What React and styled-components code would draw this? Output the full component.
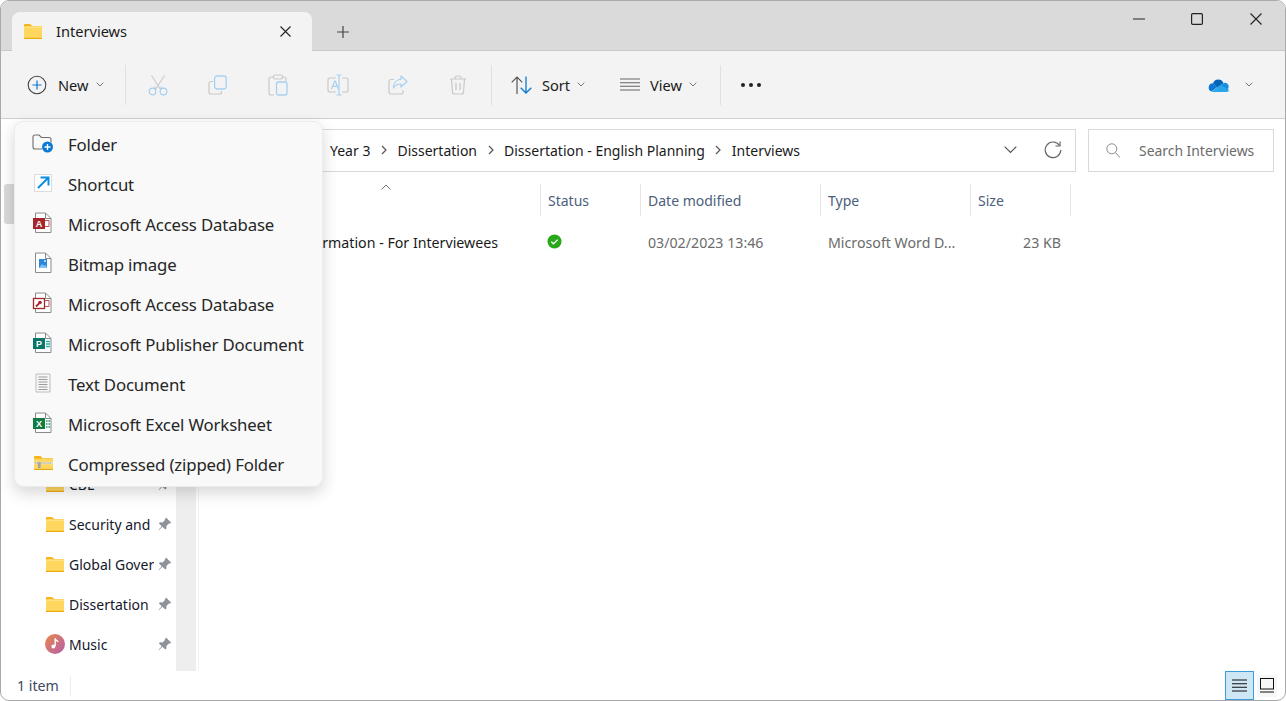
import React from "react";
import styled, { createGlobalStyle } from "styled-components";

const Global = createGlobalStyle`
  html, body { margin: 0; padding: 0; background: #fff; }
  body { font-family: "Noto Sans", "Open Sans", sans-serif; color: #1a1a1a; }
  * { box-sizing: border-box; }
`;

const Window = styled.div`
  position: relative;
  width: 1286px;
  height: 701px;
  display: flex;
  flex-direction: column;
  border: 1px solid #a9a9a9;
  border-radius: 9px;
  overflow: hidden;
  background: #fff;
  font-size: 14.2px;
`;
const TitleBar = styled.div`
  height: 50px;
  flex: none;
  display: flex;
  background: #dadada;
  border-bottom: 1px solid #c9c9c9;
  padding-left: 11px;
`;
const Tab = styled.div`
  margin-top: 11px;
  width: 300px;
  height: 39px;
  background: #f3f3f3;
  border-radius: 8px 8px 0 0;
  display: flex;
  align-items: center;
  padding: 0 12px 1px 12px;
`;
const TabTitle = styled.span`
  flex: 1;
  margin-left: 14px;
  color: #1a1a1a;
  font-size: 14.6px;
`;
const TabClose = styled.span`
  display: flex;
  margin-right: 9px;
`;
const NewTab = styled.div`
  margin: 25px 0 0 25px;
  width: 12px;
  height: 12px;
  display: flex;
`;
const WindowControls = styled.div`
  margin-left: auto;
  display: flex;
`;
const WinBtn = styled.div`
  width: 58.5px;
  height: 36px;
  display: flex;
  align-items: center;
  justify-content: center;
`;
const Toolbar = styled.div`
  height: 68px;
  flex: none;
  display: flex;
  align-items: center;
  background: #f3f3f3;
  border-bottom: 1px solid #cfcfcf;
  padding-left: 26px;
`;
const NewButton = styled.div`
  width: 98px;
  display: flex;
  align-items: center;
`;
const Label = styled.span`
  font-size: 14.6px;
  color: #1a1a1a;
  margin-left: ${(p) => p.$gap}px;
`;
const Caret = styled.span`
  display: flex;
  margin-left: ${(p) => p.$gap}px;
`;
const Sep = styled.div`
  width: 1px;
  height: 40px;
  background: #e0e0e0;
  flex: none;
  margin-left: ${(p) => p.$left || 0}px;
  margin-right: ${(p) => p.$right || 0}px;
`;
const IconBtn = styled.div`
  width: 60px;
  display: flex;
  justify-content: center;
`;
const DropButton = styled.div`
  width: ${(p) => p.$w}px;
  display: flex;
  align-items: center;
`;
const Dots = styled.div`
  margin-left: 20px;
  display: flex;
  gap: 4px;
`;
const Dot = styled.i`
  display: block;
  width: 4px;
  height: 4px;
  border-radius: 50%;
  background: #222;
`;
const CloudArea = styled.div`
  margin-left: auto;
  margin-right: 32px;
  display: flex;
  align-items: center;
  gap: 16px;
`;
const AddressRow = styled.div`
  height: 62px;
  flex: none;
  display: flex;
  align-items: center;
  gap: 12px;
  padding: 0 11px 0 120px;
`;
const AddressBox = styled.div`
  flex: 1;
  height: 43px;
  border: 1px solid #d9d9d9;
  display: flex;
  align-items: center;
  padding: 0 13px 0 208px;
`;
const Crumbs = styled.div`
  flex: 1;
  display: flex;
  align-items: center;
  gap: 10.5px;
`;
const Crumb = styled.span`
  font-size: 14px;
  color: #1a1a1a;
`;
const AddressTools = styled.div`
  display: flex;
  align-items: center;
  gap: 27px;
`;
const SearchBox = styled.div`
  width: 186px;
  height: 43px;
  border: 1px solid #d9d9d9;
  display: flex;
  align-items: center;
  padding-left: 17px;
  gap: 19px;
  color: #6b6b6b;
  font-size: 13.9px;
`;
const Content = styled.div`
  flex: 1;
  min-height: 0;
  display: flex;
`;
const Sidebar = styled.nav`
  width: 175px;
  flex: none;
  padding-top: 3px;
`;
const NavRow = styled.div`
  height: 40px;
  margin-left: 3px;
  padding-left: 41px;
  display: flex;
  align-items: center;
  border-radius: 3px;
  background: ${(p) => (p.$active ? "#d9d9d9" : "transparent")};
`;
const NavIcon = styled.span`
  width: 20px;
  display: flex;
  justify-content: center;
  flex: none;
`;
const NavText = styled.span`
  width: 85px;
  margin-left: 4px;
  overflow: hidden;
  white-space: nowrap;
  font-size: 14px;
  color: #14182a;
  flex: none;
`;
const Pin = styled.span`
  display: flex;
  margin-left: 4px;
`;
const Track = styled.div`
  width: 20px;
  flex: none;
  background: #eeeeee;
`;
const Divider = styled.div`
  width: 1px;
  margin-left: 2px;
  flex: none;
  background: #f3f3f3;
`;
const Files = styled.div`
  flex: 1;
  padding: 3px 0 0 1px;
`;
const HeaderRow = styled.div`
  position: relative;
  display: flex;
  height: 32px;
`;
const HeaderCell = styled.div`
  width: ${(p) => p.$w}px;
  flex: none;
  display: flex;
  align-items: center;
  padding-left: 7px;
  border-right: 1px solid #e5e5e5;
  font-size: 14px;
  color: #4b607c;
`;
const SortMark = styled.span`
  position: absolute;
  left: 181px;
  top: 0;
  display: flex;
`;
const FileRow = styled.div`
  display: flex;
  align-items: center;
  height: 40px;
  margin-top: 6px;
`;
const FileCell = styled.div`
  width: ${(p) => p.$w}px;
  flex: none;
  display: flex;
  align-items: center;
  padding: ${(p) => p.$pad || "0 0 0 7px"};
  justify-content: ${(p) => (p.$end ? "flex-end" : "flex-start")};
  font-size: 14.2px;
  color: ${(p) => p.$color || "#6b6b6b"};
  white-space: nowrap;
`;
const StatusBar = styled.div`
  height: 29px;
  flex: none;
  display: flex;
  align-items: center;
  padding-left: 16px;
  font-size: 14.2px;
  color: #3b4a60;
`;
const ItemSep = styled.div`
  width: 1px;
  height: 20px;
  margin-left: 11px;
  background: #ececec;
`;
const ViewToggles = styled.div`
  margin-left: auto;
  margin-right: 8px;
  display: flex;
  align-items: center;
  gap: 3px;
`;
const ToggleOn = styled.div`
  width: 29px;
  height: 29px;
  border: 1px solid #3d9bdc;
  background: #cfe6f5;
  display: flex;
  align-items: center;
  justify-content: center;
`;
const ToggleOff = styled.div`
  width: 20px;
  height: 22px;
  background: #f7f7f7;
  display: flex;
  align-items: center;
  justify-content: center;
`;
const Menu = styled.div`
  position: absolute;
  left: 13px;
  top: 120px;
  width: 309px;
  height: 366px;
  padding-top: 2.5px;
  background: #f9f9f9;
  border: 1px solid #ececec;
  border-radius: 9px;
  box-shadow: 0 6px 16px rgba(0, 0, 0, 0.16);
`;
const MenuRow = styled.div`
  height: 40px;
  display: flex;
  align-items: center;
  padding-left: 17px;
`;
const MenuIcon = styled.span`
  width: 22px;
  margin-bottom: 3px;
  display: flex;
  justify-content: center;
  flex: none;
`;
const MenuText = styled.span`
  margin-left: 14px;
  font-size: 16.8px;
  letter-spacing: -0.15px;
  color: #262626;
  white-space: nowrap;
`;

const Svg = ({ w, h, children }) => (
  <svg width={w} height={h} viewBox={`0 0 ${w} ${h}`} fill="none" style={{ display: "block" }}>
    {children}
  </svg>
);

const Chevron = ({ color = "#777" }) => (
  <Svg w={8} h={5}>
    <path d="M.7.7 4 4 7.300.7" stroke={color} strokeWidth="1" />
  </Svg>
);
const BigChevron = () => (
  <Svg w={13} h={8}>
    <path d="M.7.7 6.500 6.500 12.300.7" stroke="#555" strokeWidth="1.200" />
  </Svg>
);
const CrumbSep = () => (
  <Svg w={6} h={10}>
    <path d="M1 1l4 4-4 4" stroke="#555" strokeWidth="1.200" />
  </Svg>
);
const Folder = ({ w = 18, h = 15 }) => (
  <svg width={w} height={h} viewBox="0 0 18 15" style={{ display: "block" }}>
    <path d="M0 1.200C0 .5.500 0 1.200 0h4.200c.5 0 .9.200 1.200.5L8.300 2H18v3H0z" fill="#f5b518" />
    <rect x="0" y="2.600" width="18" height="12.400" rx=".8" fill="#ffd75e" />
    <rect x="0" y="2.600" width="18" height="1" fill="#ffe99c" />
    <rect x="0" y="13.800" width="18" height="1.200" fill="#ebac12" />
  </svg>
);
const PinIcon = () => (
  <Svg w={14} h={14}>
    <path d="M8.300.8l4.900 4.900-1.200.9-1.100-.2-2.500 2.500.1 2.600-1.200 1.100-2.900-2.900L1.200 13l-.4-.4 2.900-3.300L.9 6.400l1-1.200 2.700.2 2.400-2.500-.1-1.100z" fill="#8d939a" />
  </Svg>
);
const MusicIcon = () => (
  <svg width="20" height="20" viewBox="0 0 20 20" style={{ display: "block" }}>
    <defs>
      <linearGradient id="mg" x1="0" y1="0" x2="1" y2="1">
        <stop offset="0" stopColor="#ea8748" />
        <stop offset="1" stopColor="#b45fae" />
      </linearGradient>
    </defs>
    <circle cx="10" cy="10" r="10" fill="url(#mg)" />
    <path d="M10.200 4.500v7.500" stroke="#fff" strokeWidth="1.400" />
    <path d="M10.200 4.500c.3 2 2.200 2 3 3.400" stroke="#fff" strokeWidth="1.300" />
    <circle cx="8.400" cy="12.600" r="2" fill="#fff" />
  </svg>
);

const G = "#c9c9c9";
const B = "#a8d0f0";
const CutIcon = () => (
  <Svg w={20} h={22}>
    <path d="M3.500 1.500l9 14M16.500 1.500l-9 14" stroke={G} strokeWidth="1.100" />
    <path d="M6.500 12.500l1 3M13.500 12.500l-1 3" stroke={B} strokeWidth="1.100" />
    <circle cx="4.500" cy="17.500" r="3.300" stroke={B} strokeWidth="1.200" />
    <circle cx="15.500" cy="17.500" r="3.300" stroke={B} strokeWidth="1.200" />
  </Svg>
);
const CopyIcon = () => (
  <Svg w={20} h={20}>
    <path d="M5 5.500H3a2 2 0 0 0-2 2V16a2 2 0 0 0 2 2h8.500a2 2 0 0 0 2-2v-1" stroke={G} strokeWidth="1.200" transform="translate(0 1)" />
    <rect x="6.600" y="1" width="11.600" height="13" rx="2.400" stroke={B} strokeWidth="1.300" />
  </Svg>
);
const PasteIcon = () => (
  <Svg w={20} h={22}>
    <path d="M5.500 3H3a2 2 0 0 0-2 2v14a2 2 0 0 0 2 2h3" stroke={G} strokeWidth="1.200" />
    <path d="M14 3h2a2 2 0 0 1 2 2v2" stroke={G} strokeWidth="1.200" />
    <rect x="5.500" y="1" width="9" height="4" rx="1.500" stroke={G} strokeWidth="1.200" />
    <rect x="8.500" y="8" width="10.500" height="13" rx="2" stroke={B} strokeWidth="1.300" />
  </Svg>
);
const RenameIcon = () => (
  <Svg w={22} h={22}>
    <path d="M9 4H3a2 2 0 0 0-2 2v10a2 2 0 0 0 2 2h6M15 4h4a2 2 0 0 1 2 2v10a2 2 0 0 1-2 2h-4" stroke={G} strokeWidth="1.200" />
    <path d="M12 1v20M9.500 1h5M9.500 21h5" stroke={B} strokeWidth="1.200" />
    <path d="M4.500 15L7.700 7h.6l3 8M5.700 12.300h4.800" stroke={B} strokeWidth="1.200" />
  </Svg>
);
const ShareIcon = () => (
  <Svg w={20} h={20}>
    <path d="M6 4.500H3a2 2 0 0 0-2 2V17a2 2 0 0 0 2 2h10a2 2 0 0 0 2-2v-2" stroke={G} strokeWidth="1.200" />
    <path d="M13 1l6 5.500-6 5.500V9c-4 0-6 1.500-7.500 4C5.500 8.500 8 4.500 13 4.200z" stroke={B} strokeWidth="1.200" strokeLinejoin="round" />
  </Svg>
);
const TrashIcon = () => (
  <Svg w={18} h={20}>
    <path d="M1 4h16M6 4V3a2 2 0 0 1 2-2h2a2 2 0 0 1 2 2v1" stroke={G} strokeWidth="1.200" />
    <path d="M2.500 4l1 13a2 2 0 0 0 2 2h7a2 2 0 0 0 2-2l1-13" stroke={G} strokeWidth="1.200" />
    <path d="M7 8v7M11 8v7" stroke={G} strokeWidth="1.400" />
  </Svg>
);
const SortIcon = () => (
  <Svg w={21} h={18}>
    <path d="M6 18V1M.7 6.300 6 1l5.300 5.300" stroke="#555" strokeWidth="1.200" />
    <path d="M15 .5V17M9.700 11.700 15 17l5.300-5.300" stroke="#0a7cd6" strokeWidth="1.300" />
  </Svg>
);
const ViewIcon = () => (
  <Svg w={20} h={13}>
    <path d="M0 1h20M0 4.700h20M0 8.300h20M0 12h20" stroke="#666" strokeWidth="1.100" />
  </Svg>
);
const OneDrive = () => (
  <svg width="21" height="14" viewBox="0 0 21 14" style={{ display: "block" }}>
    <path d="M5 5.200A5.500 5.500 0 0 1 15.500 5.300L9 9.500z" fill="#0364b8" />
    <path d="M5 5.200a4.300 4.300 0 0 0-1.600 8.300L9 9.500z" fill="#0a78d4" />
    <path d="M15.500 5.300L9 9.500l5 4.500h5l1.500-4.600a3.500 3.500 0 0 0-5-4.100z" fill="#1490df" />
    <path d="M3.400 13.500c.6.300 1.200.5 1.900.5h13.200c1.200 0 2.200-.9 2.500-2L13 7.200z" fill="#28a8ea" />
  </svg>
);

const DocOutline = ({ children }) => (
  <Svg w={22} h={22}>
    <path d="M3.500 1h10l5.500 5.500V20.500H3.500z" fill="#fff" stroke="#8a8a8a" strokeWidth="1" />
    <path d="M13.500 1v5.500H19" stroke="#8a8a8a" strokeWidth="1" />
    {children}
  </Svg>
);
const Letter = ({ bg, c }) => (
  <>
    <rect x="1" y="6" width="12" height="11" fill={bg} />
    <text x="7" y="15" textAnchor="middle" fontSize="9" fontWeight="700" fill="#fff" fontFamily="Liberation Sans, sans-serif">{c}</text>
  </>
);
const FolderNew = () => (
  <Svg w={22} h={20}>
    <path d="M1 4a2 2 0 0 1 2-2h4l2.500 2.500H17a2 2 0 0 1 2 2v3M1 4v10a2 2 0 0 0 2 2h7" stroke="#6e6e6e" strokeWidth="1.100" />
    <circle cx="15.500" cy="14" r="5.500" fill="#0a78d4" />
    <path d="M15.500 11v6M12.500 14h6" stroke="#fff" strokeWidth="1.300" />
  </Svg>
);
const ShortcutIcon = () => (
  <Svg w={18} h={18}>
    <rect x=".5" y=".5" width="17" height="17" fill="#fff" stroke="#dcdcdc" />
    <path d="M4 14L14 4M6.500 3.500h8v8" stroke="#0c8ee6" strokeWidth="2" fill="none" />
  </Svg>
);
const AccessIcon = () => (
  <DocOutline>
    <Letter bg="#a4262c" c="A" />
    <path d="M13 8.500h4v6h-4" stroke="#c8505a" strokeWidth="1" />
  </DocOutline>
);
const BitmapIcon = () => (
  <DocOutline>
    <rect x="7" y="7" width="8" height="9" fill="#2b88d8" />
    <path d="M7 16l3-4 2 2 1.200-1.500L15 16z" fill="#7fc4f5" />
    <circle cx="13" cy="9" r="1" fill="#d9efff" />
  </DocOutline>
);
const KeyAccessIcon = () => (
  <DocOutline>
    <rect x="1.500" y="6.500" width="11" height="10" fill="#fff" stroke="#a4262c" strokeWidth="1.300" />
    <path d="M4 14.500L7 11.500" stroke="#a4262c" strokeWidth="1.800" />
    <circle cx="8" cy="10.500" r="1.800" fill="#a4262c" />
    <path d="M13 8.500h4v6h-4" stroke="#c8505a" strokeWidth="1" />
  </DocOutline>
);
const PublisherIcon = () => (
  <DocOutline>
    <Letter bg="#077568" c="P" />
    <path d="M14 9.500h4M14 12h4M14 14.500h4" stroke="#26b5a5" strokeWidth="1.300" />
  </DocOutline>
);
const TextDocIcon = () => (
  <Svg w={18} h={20}>
    <path d="M2 1h14v18H2z" fill="#f7f7f7" stroke="#bdbdbd" />
    <path d="M4.500 4h9M4.500 6.500h9M4.500 9h9M4.500 11.500h9M4.500 14h9M4.500 16.500h9" stroke="#9a9a9a" strokeWidth="1" />
  </Svg>
);
const ExcelIcon = () => (
  <DocOutline>
    <Letter bg="#107c41" c="X" />
    <path d="M14 9h1.600M16.400 9h1.600M14 12h1.600M16.400 12h1.600M14 15h1.600M16.400 15h1.600" stroke="#21a366" strokeWidth="1.500" />
  </DocOutline>
);
const ZipIcon = () => (
  <svg width="19" height="14" viewBox="0 0 20 16" preserveAspectRatio="none" style={{ display: "block" }}>
    <path d="M0 1.500C0 .7.500 0 1.300 0h5c.5 0 1 .2 1.300.6L9 2.500h11V6H0z" fill="#f5b518" />
    <rect x="0" y="3" width="20" height="13" fill="#ffd75e" />
    <rect x="0" y="6.500" width="20" height="3" fill="#e8e0c4" />
    <rect x="0" y="14.800" width="20" height="1.200" fill="#e3a714" />
    <path d="M1 8h18" stroke="#9a9a8a" strokeWidth="1" strokeDasharray="1 1" />
    <rect x="4" y="7" width="3" height="7" fill="#a7a79c" />
  </svg>
);

const Close = ({ size }) => (
  <Svg w={size} h={size}>
    <path d={`M.5.5L${size - 0.5} ${size - 0.5}M${size - 0.5}.5L.5 ${size - 0.5}`} stroke="#222" strokeWidth="1.100" />
  </Svg>
);

const navItems = [
  { t: "Home", active: true },
  { t: "OneDrive" },
  { t: "Desktop" },
  { t: "Downloads" },
  { t: "Documents" },
  { t: "Pictures" },
  { t: "Year 3" },
  { t: "CBL" },
  { t: "Security and" },
  { t: "Global Gover" },
  { t: "Dissertation" },
  { t: "Music", music: true },
];

const menuItems = [
  ["Folder", <FolderNew />],
  ["Shortcut", <ShortcutIcon />],
  ["Microsoft Access Database", <AccessIcon />],
  ["Bitmap image", <BitmapIcon />],
  ["Microsoft Access Database", <KeyAccessIcon />],
  ["Microsoft Publisher Document", <PublisherIcon />],
  ["Text Document", <TextDocIcon />],
  ["Microsoft Excel Worksheet", <ExcelIcon />],
  ["Compressed (zipped) Folder", <ZipIcon />],
];

const crumbs = ["Year 3", "Dissertation", "Dissertation - English Planning", "Interviews"];

export default function App() {
  return (
    <>
      <Global />
      <Window>
        <TitleBar>
          <Tab>
            <Folder />
            <TabTitle>Interviews</TabTitle>
            <TabClose>
              <Close size={11} />
            </TabClose>
          </Tab>
          <NewTab>
            <Svg w={12} h={12}>
              <path d="M6 0v12M0 6h12" stroke="#444" strokeWidth="1.200" />
            </Svg>
          </NewTab>
          <WindowControls>
            <WinBtn>
              <Svg w={12} h={2}>
                <path d="M0 1h12" stroke="#222" strokeWidth="1.100" />
              </Svg>
            </WinBtn>
            <WinBtn>
              <Svg w={12} h={12}>
                <rect x=".6" y=".6" width="10.800" height="10.800" rx="1.200" stroke="#222" strokeWidth="1.200" />
              </Svg>
            </WinBtn>
            <WinBtn>
              <Close size={12} />
            </WinBtn>
          </WindowControls>
        </TitleBar>

        <Toolbar>
          <NewButton>
            <Svg w={20} h={20}>
              <circle cx="10" cy="10" r="8.800" stroke="#444" strokeWidth="1.100" />
              <path d="M10 5.500v9M5.500 10h9" stroke="#0a78d4" strokeWidth="1.200" />
            </Svg>
            <Label $gap={11}>New</Label>
            <Caret $gap={7}><Chevron /></Caret>
          </NewButton>
          <Sep $right={2} />
          <IconBtn><CutIcon /></IconBtn>
          <IconBtn><CopyIcon /></IconBtn>
          <IconBtn><PasteIcon /></IconBtn>
          <IconBtn><RenameIcon /></IconBtn>
          <IconBtn><ShareIcon /></IconBtn>
          <IconBtn><TrashIcon /></IconBtn>
          <Sep $left={3} $right={19} />
          <DropButton $w={109}>
            <SortIcon />
            <Label $gap={10}>Sort</Label>
            <Caret $gap={7}><Chevron /></Caret>
          </DropButton>
          <DropButton $w={100}>
            <ViewIcon />
            <Label $gap={10}>View</Label>
            <Caret $gap={7}><Chevron /></Caret>
          </DropButton>
          <Sep />
          <Dots><Dot /><Dot /><Dot /></Dots>
          <CloudArea>
            <OneDrive />
            <Chevron />
          </CloudArea>
        </Toolbar>

        <AddressRow>
          <AddressBox>
            <Crumbs>
              {crumbs.map((c, i) => (
                <React.Fragment key={c}>
                  {i > 0 && <CrumbSep />}
                  <Crumb>{c}</Crumb>
                </React.Fragment>
              ))}
            </Crumbs>
            <AddressTools>
              <BigChevron />
              <Svg w={18} h={18}>
                <path d="M15.500 4.500A7.800 7.800 0 1 0 16.800 9" stroke="#666" strokeWidth="1.200" />
                <path d="M16 .5v4.500h-4.500" stroke="#666" strokeWidth="1.200" />
              </Svg>
            </AddressTools>
          </AddressBox>
          <SearchBox>
            <Svg w={14} h={15}>
              <circle cx="5.800" cy="5.800" r="5" stroke="#8a8a8a" strokeWidth="1" />
              <path d="M9.500 9.500l4.300 5" stroke="#8a8a8a" strokeWidth="1" />
            </Svg>
            Search Interviews
          </SearchBox>
        </AddressRow>

        <Content>
          <Sidebar>
            {navItems.map((n) => (
              <NavRow key={n.t} $active={n.active}>
                <NavIcon>{n.music ? <MusicIcon /> : <Folder />}</NavIcon>
                <NavText>{n.t}</NavText>
                <Pin><PinIcon /></Pin>
              </NavRow>
            ))}
          </Sidebar>
          <Track />
          <Divider />
          <Files>
            <HeaderRow>
              <HeaderCell $w={341}>Name</HeaderCell>
              <HeaderCell $w={100}>Status</HeaderCell>
              <HeaderCell $w={180}>Date modified</HeaderCell>
              <HeaderCell $w={150}>Type</HeaderCell>
              <HeaderCell $w={100}>Size</HeaderCell>
              <SortMark>
                <Svg w={10} h={6}>
                  <path d="M.5 5.500L5 1l4.500 4.500" stroke="#777" strokeWidth="1" />
                </Svg>
              </SortMark>
            </HeaderRow>
            <FileRow>
              <FileCell $w={341} $end $pad="0 43px 0 0" $color="#1a1a1a">Information - For Interviewees</FileCell>
              <FileCell $w={100} $pad="0 0 2px 6px">
                <svg width="15" height="15" viewBox="0 0 16 16" style={{ display: "block" }}>
                  <circle cx="8" cy="8" r="7.500" fill="#2aa71b" />
                  <path d="M4.500 8.200l2.400 2.200 4.500-4.400" stroke="#fff" strokeWidth="1.400" fill="none" />
                </svg>
              </FileCell>
              <FileCell $w={180}>03/02/2023 13:46</FileCell>
              <FileCell $w={150}>Microsoft Word D...</FileCell>
              <FileCell $w={100} $end $pad="0 10px 0 0">23 KB</FileCell>
            </FileRow>
          </Files>
        </Content>

        <StatusBar>
          1 item
          <ItemSep />
          <ViewToggles>
            <ToggleOn>
              <Svg w={15} h={13}>
                <path d="M0 1h15M0 4.700h15M0 8.300h15M0 12h15" stroke="#111" strokeWidth="1.100" />
              </Svg>
            </ToggleOn>
            <ToggleOff>
              <Svg w={14} h={15}>
                <rect x=".5" y=".5" width="13" height="10.500" stroke="#111" />
                <path d="M0 14h14" stroke="#111" />
              </Svg>
            </ToggleOff>
          </ViewToggles>
        </StatusBar>

        <Menu>
          {menuItems.map(([t, icon], i) => (
            <MenuRow key={i}>
              <MenuIcon>{icon}</MenuIcon>
              <MenuText>{t}</MenuText>
            </MenuRow>
          ))}
        </Menu>
      </Window>
    </>
  );
}
